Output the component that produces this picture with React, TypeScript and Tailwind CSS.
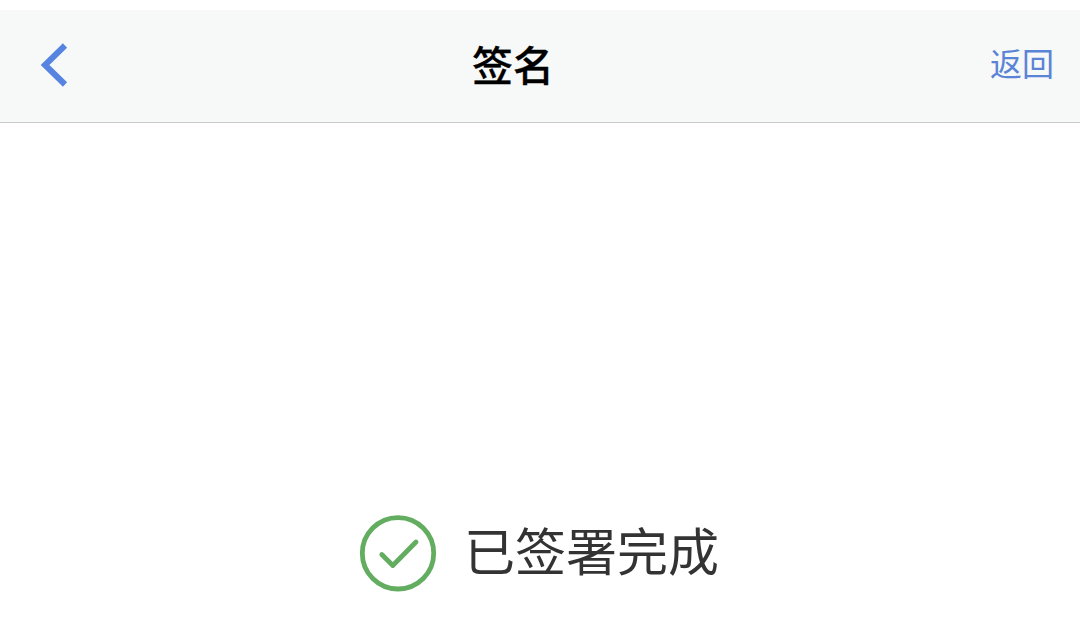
export default function App() {
  return (
    <div className="flex h-[624px] w-[1080px] flex-col overflow-hidden bg-white pt-[10px] font-['Noto_Sans_CJK_SC',sans-serif]">
      {/* Header */}
      <header className="flex h-[113px] shrink-0 items-center border-b border-[#c9c9c9] bg-[#f7f8f8] pr-[26px] pl-10">
        <button className="w-[432px]" aria-label="返回上一页">
          <svg className="mb-[2px] h-[44px] w-[28px]" viewBox="0 0 28 44" fill="none" stroke="#5684e0" strokeWidth="6">
            <path d="M25 2.5 L5 22 L25 41.5" />
          </svg>
        </button>
        <h1 className="pb-[6px] text-[41px] leading-none font-medium text-black [-webkit-text-stroke:0.3px_black]">签名</h1>
        <button className="ml-auto pb-[8px] text-[32px] leading-none text-[#5b84d6]">返回</button>
      </header>

      {/* Result */}
      <main className="flex items-center gap-[27px] pt-[391px] pl-[359px]">
        <svg className="h-[78px] w-[78px]" viewBox="0 0 78 78" fill="none" stroke="#62ad60" strokeWidth="4.8">
          <circle cx="39" cy="39.3" r="35.7" />
          <path d="M22.8 40.5 L33.8 51.5 L57 28" strokeLinecap="round" strokeLinejoin="round" />
        </svg>
        <p className="pb-[7px] text-[51px] leading-none text-[#333333]">已签署完成</p>
      </main>
    </div>
  )
}
